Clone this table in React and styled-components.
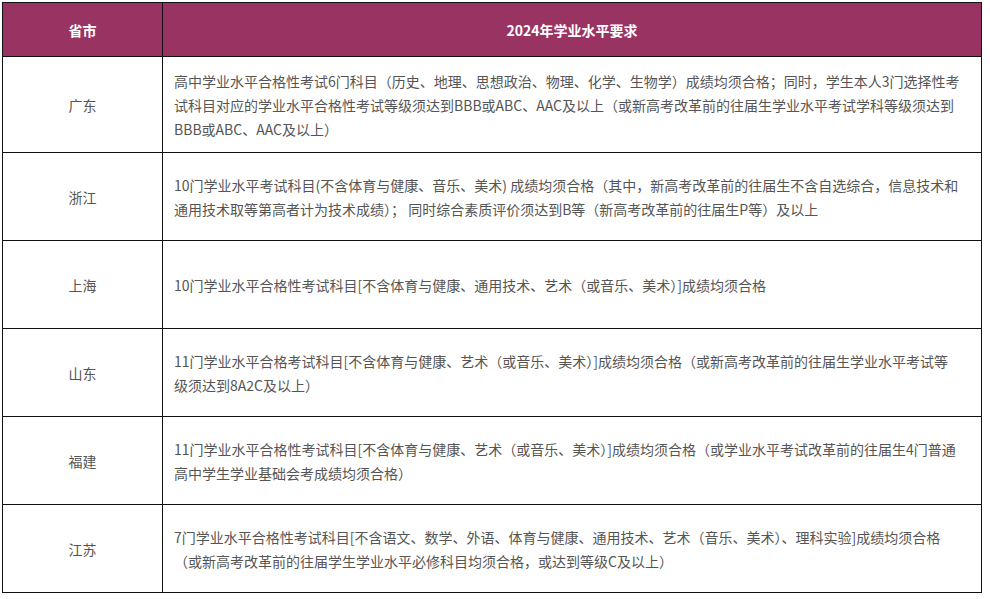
import React from "react";
import styled, { createGlobalStyle } from "styled-components";

const rows = [
  {
    province: "广东",
    text: "高中学业水平合格性考试6门科目（历史、地理、思想政治、物理、化学、生物学）成绩均须合格；同时，学生本人3门选择性考试科目对应的学业水平合格性考试等级须达到BBB或ABC、AAC及以上（或新高考改革前的往届生学业水平考试学科等级须达到BBB或ABC、AAC及以上）",
  },
  {
    province: "浙江",
    text: "10门学业水平考试科目(不含体育与健康、音乐、美术) 成绩均须合格（其中，新高考改革前的往届生不含自选综合，信息技术和通用技术取等第高者计为技术成绩）； 同时综合素质评价须达到B等（新高考改革前的往届生P等）及以上",
  },
  {
    province: "上海",
    text: "10门学业水平合格性考试科目[不含体育与健康、通用技术、艺术（或音乐、美术）]成绩均须合格",
  },
  {
    province: "山东",
    text: "11门学业水平合格考试科目[不含体育与健康、艺术（或音乐、美术）]成绩均须合格（或新高考改革前的往届生学业水平考试等级须达到8A2C及以上）",
  },
  {
    province: "福建",
    text: "11门学业水平合格性考试科目[不含体育与健康、艺术（或音乐、美术）]成绩均须合格（或学业水平考试改革前的往届生4门普通高中学生学业基础会考成绩均须合格）",
  },
  {
    province: "江苏",
    text: "7门学业水平合格性考试科目[不含语文、数学、外语、体育与健康、通用技术、艺术（音乐、美术）、理科实验]成绩均须合格（或新高考改革前的往届学生学业水平必修科目均须合格，或达到等级C及以上）",
  },
];

function App() {
  return (
    <Page>
      <GlobalStyle />
      <Table>
        <thead>
          <tr>
            <HeadCell $width="159px">省市</HeadCell>
            <HeadCell>2024年学业水平要求</HeadCell>
          </tr>
        </thead>
        <tbody>
          {rows.map((row) => (
            <tr key={row.province}>
              <ProvinceCell>{row.province}</ProvinceCell>
              <TextCell>{row.text}</TextCell>
            </tr>
          ))}
        </tbody>
      </Table>
    </Page>
  );
}

const GlobalStyle = createGlobalStyle`
  body {
    margin: 0;
    background: #fff;
    font-family: "Microsoft YaHei", "Noto Sans CJK SC", "Noto Sans", sans-serif;
  }
`;

const Page = styled.div`
  padding: 2px;
`;

const Table = styled.table`
  width: 980px;
  border-collapse: collapse;
  table-layout: fixed;
  font-size: 14px;
  color: #555;
`;

const HeadCell = styled.th`
  width: ${(props) => props.$width || "auto"};
  height: 53px;
  padding: 0;
  background-color: #993462;
  color: #fff;
  font-weight: bold;
  font-size: 14px;
  text-align: center;
  border: 1px solid #111;
`;

const ProvinceCell = styled.td`
  height: 87px;
  padding: 0;
  text-align: center;
  vertical-align: middle;
  border: 1px solid #111;
`;

const TextCell = styled.td`
  padding: 12px 21px 11px 11px;
  line-height: 24px;
  vertical-align: middle;
  border: 1px solid #111;
`;

export default App;
